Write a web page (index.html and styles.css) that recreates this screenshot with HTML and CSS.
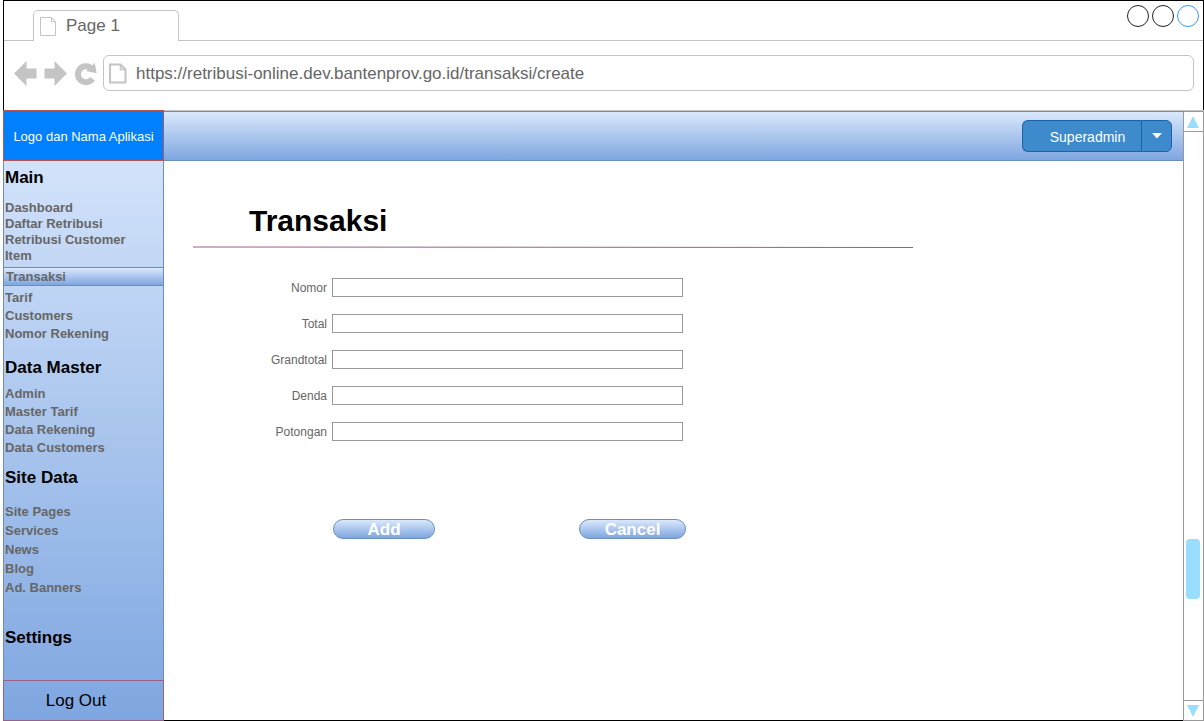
FILE: index.html
```html
<!DOCTYPE html>
<html lang="id">
<head>
<meta charset="utf-8">
<title>Transaksi</title>
<link rel="stylesheet" href="styles.css">
</head>
<body>
<div class="window">
  <header class="chrome">
    <div class="tabstrip">
      <div class="tab">
        <svg class="tab-icon" width="18" height="20" viewBox="0 0 18 20" fill="none" stroke="#c4c4c4"><path d="M.5.5h11l4 4v14H.5z"/><path d="M11.500.5v4h4"/></svg>
        <span>Page 1</span>
      </div>
      <div class="controls">
        <button class="dot" aria-label="Minimize"></button>
        <button class="dot" aria-label="Maximize"></button>
        <button class="dot dot-close" aria-label="Close"></button>
      </div>
    </div>
    <div class="toolbar">
      <button class="nav" aria-label="Back"><svg width="24" height="26" viewBox="0 0 24 26"><path fill="#c4c4c4" d="M0 13.500 12.500 1V8.500H22.500V18.500H12.500V26z"/></svg></button>
      <button class="nav" aria-label="Forward"><svg width="24" height="26" viewBox="0 0 24 26"><path fill="#c4c4c4" d="M23 13.500 10.500 1V8.500H.5V18.500H10.500V26z"/></svg></button>
      <button class="nav" aria-label="Reload"><svg width="23" height="26" viewBox="0 0 23 26"><path fill="none" stroke="#c4c4c4" stroke-width="6" d="M18.500 18.800A8 8 0 1 1 17 8"/><path fill="#c4c4c4" d="M20.800 3 22.700 13.300 12 11z"/></svg></button>
      <label class="address">
        <svg width="18" height="21" viewBox="0 0 18 21" fill="none" stroke="#c4c4c4" stroke-width="2"><path d="M1 1.500h10.500l5 5V19.500H1z"/><path stroke-width="1.500" d="M11.500 1.500v5h5"/></svg>
        <input type="text" aria-label="Address" value="https://retribusi-online.dev.bantenprov.go.id/transaksi/create">
      </label>
    </div>
  </header>

  <div class="page">
    <aside class="sidebar">
      <div class="logo">Logo dan Nama Aplikasi</div>
      <nav class="menu">
        <h2>Main</h2>
        <ul class="main-list">
          <li><a href="#">Dashboard</a></li>
          <li><a href="#">Daftar Retribusi</a></li>
          <li><a href="#">Retribusi Customer</a></li>
          <li><a href="#">Item</a></li>
        </ul>
        <a class="active" href="#">Transaksi</a>
        <ul>
          <li><a href="#">Tarif</a></li>
          <li><a href="#">Customers</a></li>
          <li><a href="#">Nomor Rekening</a></li>
        </ul>
        <h2 class="master-title">Data Master</h2>
        <ul>
          <li><a href="#">Admin</a></li>
          <li><a href="#">Master Tarif</a></li>
          <li><a href="#">Data Rekening</a></li>
          <li><a href="#">Data Customers</a></li>
        </ul>
        <h2 class="site-title">Site Data</h2>
        <ul class="site-list">
          <li><a href="#">Site Pages</a></li>
          <li><a href="#">Services</a></li>
          <li><a href="#">News</a></li>
          <li><a href="#">Blog</a></li>
          <li><a href="#">Ad. Banners</a></li>
        </ul>
        <h2 class="settings-title">Settings</h2>
      </nav>
      <a class="logout" href="#">Log Out</a>
    </aside>

    <div class="content">
      <div class="topbar">
        <div class="user">
          <button class="user-name">Superadmin</button>
          <button class="user-toggle" aria-label="Open user menu"><svg width="10" height="6" viewBox="0 0 10 6"><path fill="#fff" d="M0 0h10L5 5.500z"/></svg></button>
        </div>
      </div>
      <main>
        <h1>Transaksi</h1>
        <svg class="rule" height="2" viewBox="0 0 720 2" preserveAspectRatio="none"><path d="M0 1 720 1.500" stroke="#996185"/></svg>
        <form>
          <div class="field"><label for="nomor">Nomor</label><input id="nomor" type="text"></div>
          <div class="field"><label for="total">Total</label><input id="total" type="text"></div>
          <div class="field"><label for="grandtotal">Grandtotal</label><input id="grandtotal" type="text"></div>
          <div class="field"><label for="denda">Denda</label><input id="denda" type="text"></div>
          <div class="field"><label for="potongan">Potongan</label><input id="potongan" type="text"></div>
          <div class="actions">
            <button type="button" class="add">Add</button>
            <button type="button" class="cancel">Cancel</button>
          </div>
        </form>
      </main>
    </div>

    <div class="scrollbar">
      <button class="scroll-up" aria-label="Scroll up"><svg width="12" height="12" viewBox="0 0 12 12"><path fill="#9df" d="M6 0 12 12H0z"/></svg></button>
      <div class="track"><div class="thumb"></div></div>
      <button class="scroll-down" aria-label="Scroll down"><svg width="12" height="12" viewBox="0 0 12 12"><path fill="#9df" d="M6 12 12 0H0z"/></svg></button>
    </div>
  </div>
</div>
</body>
</html>
```

FILE: styles.css
```css
* {
  box-sizing: border-box;
}

body {
  margin: 0;
  font-family: "Liberation Sans", Arial, sans-serif;
  background: #fff;
}

button {
  padding: 0;
  border: 0;
  background: none;
  font-family: inherit;
}

svg {
  display: block;
}

.window {
  display: flex;
  flex-direction: column;
  min-height: 100vh;
  padding-left: 3px;
}

/* Browser frame */
.chrome {
  border: 1px solid #000;
  border-bottom: 0;
}

.tabstrip {
  display: flex;
  justify-content: space-between;
  height: 40px;
  padding: 9px 0 0 29px;
  border-bottom: 1px solid #c4c4c4;
}

.tab {
  display: flex;
  gap: 8px;
  width: 146px;
  height: 31px;
  padding: 6px 6px 0;
  border: 1px solid #c4c4c4;
  border-bottom: 0;
  border-radius: 5px 5px 0 0;
  background: #fff;
  color: #666;
  font-size: 17px;
  line-height: 18px;
}

.tab-icon {
  flex: none;
}

.controls {
  display: flex;
  gap: 3px;
  margin-top: -5px;
  padding-right: 4px;
}

.dot {
  width: 22px;
  height: 22px;
  border: 1px solid #222;
  border-radius: 50%;
}

.dot-close {
  border-color: #3399ff;
}

.toolbar {
  display: flex;
  align-items: center;
  gap: 6px;
  padding: 14px 9px 19px 10px;
}

.address {
  display: flex;
  flex: 1;
  align-items: center;
  gap: 9px;
  height: 36px;
  padding-left: 5px;
  border: 1px solid #c4c4c4;
  border-radius: 6px;
}

.address input {
  flex: 1;
  padding: 2px 0 0;
  border: 0;
  background: none;
  color: #666;
  font: 17px "Liberation Sans", Arial, sans-serif;
}

/* Page area */
.page {
  display: grid;
  flex: 1;
  grid-template-columns: 161px 1fr 21px;
}

.sidebar {
  display: flex;
  flex-direction: column;
  background: linear-gradient(#dae8fc, #7ea6e0);
}

.logo {
  display: flex;
  align-items: center;
  justify-content: center;
  height: 51px;
  padding-top: 2px;
  border: 1px solid #b85450;
  background: #007fff;
  color: #fff;
  font-size: 13px;
}

.menu {
  flex: 1;
  padding-top: 7px;
  border: 1px solid #6c8ebf;
  border-width: 0 1px;
}

.menu h2 {
  margin: 0;
  padding-left: 1px;
  font-size: 17px;
  line-height: 20px;
}

.menu ul {
  margin: 0;
  padding: 0 0 0 1px;
  list-style: none;
  font-size: 13px;
  font-weight: bold;
  line-height: 18px;
}

.menu a {
  display: block;
  color: #666;
  text-decoration: none;
}

.menu .main-list {
  margin: 12px 0 3px;
  line-height: 16px;
}

.menu .active {
  margin-bottom: 3px;
  padding: 1px 0 0 2px;
  border: 1px solid #6c8ebf;
  border-width: 1px 0;
  background: linear-gradient(#dae8fc, #7ea6e0);
  font-size: 13px;
  font-weight: bold;
  line-height: 16px;
}

.menu .master-title {
  margin: 15px 0 7px;
}

.menu .site-title {
  margin: 11px 0 14px;
}

.menu .site-list {
  line-height: 19px;
}

.menu .settings-title {
  margin: 31px 0 0;
}

.logout {
  height: 41px;
  padding-right: 15px;
  border: 1px solid #996185;
  color: #000;
  font-size: 17px;
  line-height: 39px;
  text-align: center;
  text-decoration: none;
}

.content {
  border-top: 1px solid #c4c4c4;
  border-bottom: 1px solid #000;
}

.topbar {
  display: flex;
  align-items: center;
  justify-content: flex-end;
  height: 50px;
  padding-right: 11px;
  border: 1px solid #6c8ebf;
  border-width: 1px 0;
  background: linear-gradient(#dae8fc, #7ea6e0);
}

.user {
  display: flex;
  width: 150px;
  height: 32px;
}

.user button {
  border: 1px solid #1a62a5;
  background: #3d8bcd;
  color: #fff;
  font-size: 14px;
}

.user .user-name {
  flex: 1;
  padding: 2px 0 0 11px;
  border-right: 0;
  border-radius: 6px 0 0 6px;
}

.user .user-toggle {
  display: flex;
  align-items: center;
  justify-content: center;
  width: 31px;
  border-radius: 0 6px 6px 0;
}

main {
  padding: 40px 30px 40px 29px;
}

h1 {
  margin: 0;
  padding: 0 0 5px 56px;
  font-size: 30px;
  line-height: 40px;
}

.rule {
  width: 100%;
  max-width: 720px;
  margin-bottom: 30px;
}

form {
  display: flex;
  flex-direction: column;
  gap: 17px;
  max-width: 493px;
}

.field {
  display: grid;
  grid-template-columns: 134px 351px;
  gap: 5px;
  align-items: center;
}

.field label {
  color: #666;
  font-size: 12px;
  text-align: right;
}

.field input {
  width: 100%;
  height: 19px;
  padding: 0 4px;
  border: 1px solid #999;
  font: 12px "Liberation Sans", Arial, sans-serif;
}

.actions {
  display: flex;
  justify-content: space-between;
  margin-top: 61px;
  padding-left: 140px;
}

.actions button {
  height: 20px;
  padding-top: 1px;
  border: 1px solid #6c8ebf;
  border-radius: 10px;
  background: linear-gradient(#dae8fc, #7ea6e0);
  color: #fff;
  font-size: 17px;
  font-weight: bold;
  line-height: 18px;
}

.actions .add {
  width: 102px;
}

.actions .cancel {
  width: 107px;
}

/* Scroll bar */
.scrollbar {
  display: flex;
  flex-direction: column;
  margin-top: 1px;
  border: 1px solid #999;
  box-shadow: 0 -1px #c4c4c4;
}

.scroll-up,
.scroll-down {
  display: flex;
  align-items: center;
  justify-content: center;
  height: 20px;
  padding-right: 1px;
}

.scroll-up {
  border-bottom: 1px solid #999;
}

.scroll-down {
  border-top: 1px solid #999;
}

.track {
  display: flex;
  flex: 1;
  flex-direction: column;
  align-items: center;
  padding: 1px 1px 0 0;
}

.track::before {
  flex: 4;
  content: "";
}

.track::after {
  flex: 1;
  content: "";
}

.thumb {
  width: 14px;
  height: 60px;
  border-radius: 4px;
  background: #9df;
}
```
